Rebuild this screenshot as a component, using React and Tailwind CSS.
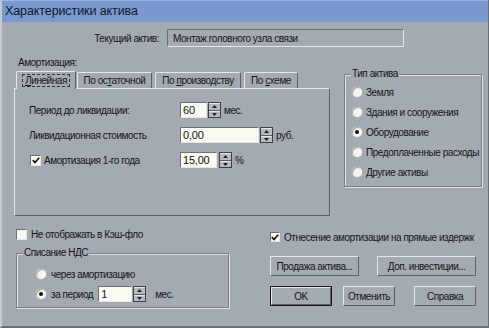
import React from "react";

const raised =
  "border border-t-[#e4e7ea] border-l-[#e4e7ea] border-r-[#5c6268] border-b-[#5c6268]";
const sunken =
  "border border-t-[#6a7077] border-l-[#6a7077] border-r-[#e4e7ea] border-b-[#e4e7ea]";

function Spinner() {
  return (
    <div className="w-[13px] h-[16px] border border-[#3c4046] bg-[#b4bac0] flex flex-col">
      <div className="flex-1 flex items-center justify-center border-b border-[#5c6268] border-t border-t-[#e4e7ea]">
        <svg width="5" height="3" viewBox="0 0 5 3">
          <polygon points="2.5,0 5,3 0,3" fill="#222" />
        </svg>
      </div>
      <div className="flex-1 flex items-center justify-center border-t border-t-[#e4e7ea]">
        <svg width="5" height="3" viewBox="0 0 5 3">
          <polygon points="0,0 5,0 2.5,3" fill="#222" />
        </svg>
      </div>
    </div>
  );
}

function Field({ w, value }) {
  return (
    <div
      className={`h-[16px] ${sunken} bg-[#fbfaf0] flex items-center pl-[2px] leading-none text-[11px] tracking-[-0.2px]`}
      style={{ width: w }}
    >
      {value}
    </div>
  );
}

function Check({ checked, small }) {
  return (
    <div
      className={`${small ? "w-[10px] h-[10px]" : "w-[11px] h-[11px]"} shrink-0 ${sunken} bg-[#fbfaf0] flex items-center justify-center`}
    >
      {checked && (
        <svg width="8" height="7" viewBox="0 0 8 7">
          <polyline points="0.8,3.2 3,5.5 7.2,0.8" fill="none" stroke="#111" strokeWidth="1.7" />
        </svg>
      )}
    </div>
  );
}

function Radio({ checked }) {
  return (
    <div className="w-[10px] h-[10px] shrink-0 rounded-full bg-[#f6f6ee] shadow-[inset_1px_1px_1px_#9aa1a8,0_0_1px_#ffffff] flex items-center justify-center">
      {checked && <div className="w-[4px] h-[4px] rounded-full bg-[#111]" />}
    </div>
  );
}

function Group({ label, className, children }) {
  return (
    <div
      className={`relative border border-[#7a8188] shadow-[1px_1px_0_#dfe3e6,inset_1px_1px_0_#dfe3e6] ${className}`}
    >
      <div className="absolute left-[6px] top-[-8px] px-[1px] bg-[#a3aab1] leading-[14px]">
        {label}
      </div>
      {children}
    </div>
  );
}

function Btn({ w, children, def }) {
  return (
    <div
      className={`h-[20px] flex items-center justify-center ${
        def ? "border border-[#1a1a1a]" : ""
      }`}
      style={{ width: w }}
    >
      <div className={`w-full h-full ${raised} flex items-center justify-center`}>{children}</div>
    </div>
  );
}

function Tab({ children, selected, w }) {
  return (
    <div
      className={`${selected ? "h-[18px] relative z-10 bg-[#a3aab1] -mb-[1px]" : "h-[16px]"} shrink-0 border border-b-0 border-t-[#e4e7ea] border-l-[#e4e7ea] border-r-[#5c6268] flex items-center justify-center rounded-t-[2px]`}
      style={{ width: w }}
    >
      {children}
    </div>
  );
}

export default function App() {
  return (
    <div className="w-[489px] h-[328px] whitespace-nowrap bg-[#a3aab1] text-[10px] tracking-[-0.45px] text-[#151515] font-['Liberation_Sans',Arial,sans-serif] flex flex-col border-l-[2px] border-l-[#c4c9ce] border-b-[2px] border-b-[#6a7077] border-r border-r-[#6a7077] overflow-hidden">
      {/* title */}
      <div className="h-[22px] bg-[#7a98d0] border-t border-t-[#9db3dd] flex items-center pl-[3px] text-[12.5px] tracking-[-0.1px] text-[#101828] shrink-0">
        Характеристики актива
      </div>

      {/* current asset */}
      <div className="flex items-center mt-[7px] h-[18px]">
        <div className="w-[157px] text-right">Текущий актив:</div>
        <div className={`ml-[8px] w-[237px] h-[18px] ${sunken} flex items-center pl-[5px]`}>
          Монтаж головного узла связи
        </div>
      </div>

      {/* middle */}
      <div className="flex mt-[9px]">
        <div className="ml-[12px] w-[316px] flex flex-col">
          <div className="pl-[4px] leading-[14px]">Амортизация:</div>
          <div className="flex items-end pl-[2px] mt-[1px] gap-[1px]">
            <Tab selected w={60}>
              <span className="border border-dashed border-[#333] px-[2px] leading-[11px]">
                <span className="underline">Л</span>инейная
              </span>
            </Tab>
            <Tab w={75}>
              По ос<span className="underline">т</span>аточной
            </Tab>
            <div className="w-[1px]" />
            <Tab w={86}>
              {"По\u00a0"}
              <span className="underline">п</span>роизводству
            </Tab>
            <div className="w-[1px]" />
            <Tab w={54}>
              {"По\u00a0"}
              <span className="underline">с</span>хеме
            </Tab>
          </div>
          <div className={`h-[128px] ${raised} border-t-[#e4e7ea] pt-[13px] pl-[14px] flex flex-col gap-[9px]`}>
            <div className="flex items-center h-[16px]">
              <div className="w-[151px]">Период до ликвидации:</div>
              <Field w={27} value="60" />
              <div className="ml-[1px]">
                <Spinner />
              </div>
              <div className="ml-[3px]">мес.</div>
            </div>
            <div className="flex items-center h-[16px]">
              <div className="w-[151px]">Ликвидационная стоимость</div>
              <Field w={79} value="0,00" />
              <div className="ml-[1px]">
                <Spinner />
              </div>
              <div className="ml-[3px]">руб.</div>
            </div>
            <div className="flex items-center h-[16px]">
              <div className="w-[151px] flex items-center pl-[1px]">
                <Check checked />
                <span className="ml-[3px]">Амортизация 1-го года</span>
              </div>
              <Field w={37} value="15,00" />
              <div className="ml-[2px]">
                <Spinner />
              </div>
              <div className="ml-[3px]">%</div>
            </div>
          </div>
        </div>

        <div className="ml-[14px] mt-[18px]">
          <Group label="Тип актива" className="w-[138px] h-[113px] pt-[10px] pl-[7px] flex flex-col gap-[6px]">
            {[
              ["Земля", false],
              ["Здания и сооружения", false],
              ["Оборудование", true],
              ["Предоплаченные расходы", false],
              ["Другие активы", false],
            ].map(([t, c]) => (
              <div key={t} className="flex items-center h-[14px]">
                <Radio checked={c} />
                <span className="ml-[4px]">{t}</span>
              </div>
            ))}
          </Group>
        </div>
      </div>

      {/* bottom */}
      <div className="flex mt-[12px]">
        <div className="ml-[14px] w-[213px] flex flex-col">
          <div className="flex items-center h-[12px]">
            <Check />
            <span className="ml-[4px]">Не отображать в Кэш-фло</span>
          </div>
          <Group label="Списание НДС" className="mt-[13px] h-[55px] pt-[13px] pl-[19px] flex flex-col gap-[5px]">
            <div className="flex items-center h-[14px]">
              <Radio />
              <span className="ml-[5px]">через амортизацию</span>
            </div>
            <div className="flex items-center h-[16px]">
              <Radio checked />
              <span className="ml-[5px]">за период</span>
              <div className="ml-[5px]">
                <Field w={34} value="1" />
              </div>
              <div className="ml-[1px]">
                <Spinner />
              </div>
              <div className="ml-[9px]">мес.</div>
            </div>
          </Group>
        </div>

        <div className="ml-[41px] flex flex-col">
          <div className="flex items-center h-[12px] mt-[3px]">
            <Check checked small />
            <span className="ml-[4px]">Отнесение амортизации на прямые издержк</span>
          </div>
          <div className="flex mt-[13px] gap-[18px]">
            <Btn w={89}>Продажа актива...</Btn>
            <Btn w={99}>Доп. инвестиции...</Btn>
          </div>
          <div className="flex mt-[10px]">
            <Btn w={62} def>
              OK
            </Btn>
            <div className="ml-[11px]">
              <Btn w={52}>Отменить</Btn>
            </div>
            <div className="ml-[19px]">
              <Btn w={62}>Справка</Btn>
            </div>
          </div>
        </div>
      </div>
    </div>
  );
}
